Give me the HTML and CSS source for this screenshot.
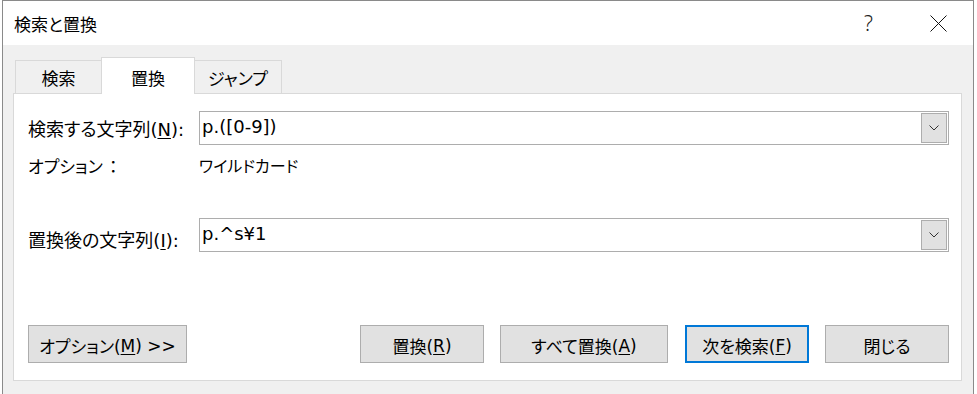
FILE: index.html
```html
<!DOCTYPE html>
<html lang="ja">
<head>
<meta charset="utf-8">
<title>検索と置換</title>
<link rel="stylesheet" href="styles.css">
</head>
<body>
<div class="window">
  <div class="titlebar">
    <div class="title">検索と置換</div>
    <div class="help">?</div>
    <div class="close">
      <svg width="17" height="17" viewBox="0 0 17 17"><path d="M0.5 0.5 L16.5 16.5 M16.5 0.5 L0.5 16.5" stroke="#111" stroke-width="1" fill="none"/></svg>
    </div>
  </div>
  <div class="client">
    <div class="tabs">
      <div class="tab tab-first">検索</div>
      <div class="tab tab-active">置換</div>
      <div class="tab tab-last">ジャンプ</div>
    </div>
    <div class="panel">
      <div class="row row-find">
        <div class="label">検索する文字列(<u>N</u>):</div>
        <div class="combo">
          <div class="value">p.([0-9])</div>
          <div class="drop"><svg width="10" height="6" viewBox="0 0 10 6"><path d="M0.5 0.5 L5 5 L9.5 0.5" stroke="#333" stroke-width="1" fill="none"/></svg></div>
        </div>
      </div>
      <div class="row row-opt">
        <div class="label label-opt">オプション<span class="fw">：</span></div>
        <div class="optval">ワイルドカード</div>
      </div>
      <div class="row row-repl">
        <div class="label label-low">置換後の文字列(<u>I</u>):</div>
        <div class="combo">
          <div class="value">p.^s¥1</div>
          <div class="drop"><svg width="10" height="6" viewBox="0 0 10 6"><path d="M0.5 0.5 L5 5 L9.5 0.5" stroke="#333" stroke-width="1" fill="none"/></svg></div>
        </div>
      </div>
      <div class="buttons">
        <div class="btn btn-opt">オプション(<u>M</u>) &gt;&gt;</div>
        <div class="btn-group">
          <div class="btn">置換(<u>R</u>)</div>
          <div class="btn btn-wide">すべて置換(<u>A</u>)</div>
          <div class="btn btn-default">次を検索(<u>F</u>)</div>
          <div class="btn">閉じる</div>
        </div>
      </div>
    </div>
  </div>
</div>
</body>
</html>
```

FILE: styles.css
```css
* { box-sizing: border-box; }
html, body { margin: 0; padding: 0; background: #ffffff; }
body {
  width: 977px;
  height: 394px;
  overflow: hidden;
  font-family: "DejaVu Sans", "Noto Sans CJK JP", sans-serif;
  font-feature-settings: "palt";
  color: #000;
}
.window {
  margin-left: 2px;
  width: 972px;
  height: 400px;
  border: 1px solid #8a8a8a;
  border-bottom: none;
  background: #f0f0f0;
}
.titlebar {
  height: 44px;
  background: #fff;
  display: flex;
  align-items: center;
  position: relative;
}
.title {
  padding-left: 11px;
  font-family: "Noto Sans CJK JP", sans-serif;
  font-size: 17px;
}
.help {
  margin-left: auto;
  font-family: "Noto Sans", sans-serif;
  font-weight: 300;
  font-size: 21px;
  width: 12px;
  margin-right: 54px;
  color: #222;
  padding-bottom: 1px;
}
.close {
  width: 17px;
  height: 17px;
  margin-right: 26px;
  display: flex;
}
.tabs {
  height: 48px;
  display: flex;
  align-items: flex-end;
  padding-left: 12px;
  position: relative;
  z-index: 2;
}
.tab {
  height: 33px;
  display: flex;
  align-items: center;
  justify-content: center;
  font-family: "Noto Sans CJK JP", sans-serif;
  font-size: 17px;
  border-top: 1px solid #d9d9d9;
  background: #f0f0f0;
}
.tab-first { width: 86px; border-left: 1px solid #d9d9d9; }
.tab-active {
  width: 94px;
  height: 37px;
  margin-bottom: -1px;
  background: #fff;
  border: 1px solid #d9d9d9;
  border-bottom: none;
  padding-top: 2px;
}
.tab-last { width: 87px; border-right: 1px solid #d9d9d9; }
.panel {
  margin: 0 11px 0 10px;
  height: 288px;
  background: #fff;
  border: 1px solid #d9d9d9;
  padding: 0 12px 0 14px;
  display: flex;
  flex-direction: column;
  position: relative;
  z-index: 1;
}
.row { display: flex; align-items: center; }
.label {
  width: 171px;
  font-size: 18px;
  white-space: nowrap;
}
.label-opt { font-size: 17px; }
.fw { font-feature-settings: normal; padding-left: 2px; }
.label u, .btn u { text-underline-offset: 2px; }
.row-find { margin-top: 17px; height: 34px; }
.row-opt { margin-top: 10px; height: 20px; }
.row-repl { margin-top: 43px; height: 34px; }
.label-low { padding-top: 7px; }
.combo {
  width: 750px;
  height: 34px;
  border: 1px solid #adadad;
  padding: 1px;
  display: flex;
  align-items: stretch;
}
.value {
  flex: 1;
  padding-left: 1px;
  font-size: 18px;
  display: flex;
  align-items: center;
  padding-bottom: 3px;
}
.drop {
  width: 26px;
  background: #e1e1e1;
  border: 1px solid #adadad;
  display: flex;
  align-items: center;
  justify-content: center;
}
.optval { font-size: 16px; }
.buttons {
  margin-top: 73px;
  display: flex;
  justify-content: space-between;
}
.btn-group { display: flex; gap: 16px; }
.btn {
  width: 124px;
  height: 38px;
  background: #e1e1e1;
  border: 1px solid #adadad;
  display: flex;
  align-items: center;
  justify-content: center;
  font-size: 17px;
  padding-top: 3px;
  white-space: nowrap;
}
.btn-opt { width: 159px; }
.btn-wide { width: 168px; margin-right: 1px; }
.btn-default { border: 2px solid #0078d7; }
```
